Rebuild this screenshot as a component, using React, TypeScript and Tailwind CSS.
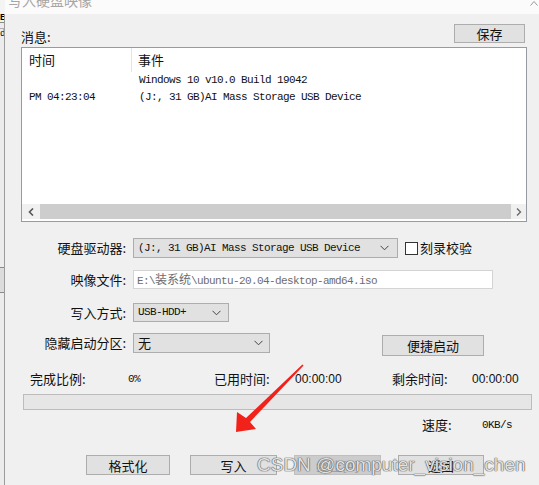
import React from "react";

const cjk = { fontFamily: '"Noto Sans CJK SC", "Noto Sans", sans-serif' };
const mono = { fontFamily: '"Liberation Mono", "Noto Sans CJK SC", monospace' };
const sans = { fontFamily: '"Liberation Sans", "Noto Sans CJK SC", sans-serif' };

function Chevron() {
  return (
    <svg width="9" height="6" viewBox="0 0 9 6" className="shrink-0">
      <path d="M0.5 0.8 L4.5 4.8 L8.5 0.8" fill="none" stroke="#444" strokeWidth="1" />
    </svg>
  );
}

function Btn({ children, w, disabled }: { children: React.ReactNode; w: string; disabled?: boolean }) {
  return (
    <div
      className={`${w} flex items-center justify-center border text-[13px] leading-none ${
        disabled ? "bg-[#cccccc] border-[#bfbfbf] text-[#a0a0a0]" : "bg-[#e1e1e1] border-[#adadad] text-[#111]"
      }`}
      style={cjk}
    >
      {children}
    </div>
  );
}

function Label({ children }: { children: React.ReactNode }) {
  return (
    <div className="w-[122px] shrink-0 text-right text-[13px] leading-[18px] text-[#111] pr-[1px]" style={cjk}>
      {children}
    </div>
  );
}

export default function App() {
  return (
    <div className="relative w-[539px] h-[485px] overflow-hidden bg-[#f0f0f0] flex flex-col">
      {/* title bar */}
      <div className="h-[14px] shrink-0 bg-[#fbfbfb] overflow-hidden flex">
        <div className="w-[5px] shrink-0 bg-[#f4f4f4]" />
        <div className="pl-[3px] -mt-[9px] text-[14px] leading-[18px] text-[#a6a6a6]" style={cjk}>
          写入硬盘映像
        </div>
        <svg className="ml-auto mr-[1px]" width="8" height="6" viewBox="0 0 8 6">
          <path d="M0.5 5.5 L4 1.5 L7.5 5.5" fill="none" stroke="#9a9a9a" strokeWidth="1" />
        </svg>
      </div>

      <div className="flex flex-1">
        {/* neighbouring window strip */}
        <div className="w-[5px] shrink-0 flex flex-col border-r border-[#9c9c9c] bg-[#ececec]">
          <div className="h-[9px] bg-[#f4f4d8] border-b border-[#888] text-[9px] leading-[9px] font-bold overflow-hidden" style={mono}>E</div>
          <div className="h-[6px] border-b border-[#b0b0b0]" />
          <div className="h-[10px] text-[9px] leading-[10px] overflow-hidden" style={mono}>d</div>
          <div className="h-[228px]" />
          <div className="h-[26px] bg-[#dcdcdc] border-y border-[#8a8a8a]" />
          <div className="flex-1" />
        </div>

        {/* dialog content */}
        <div className="flex-1 flex flex-col">
          {/* header row */}
          <div className="mt-[11px] h-[18px] flex items-end">
            <div className="ml-[16px] text-[13px] leading-[14px] text-[#111] -mb-[1px]" style={cjk}>
              消息:
            </div>
            <div className="ml-auto mr-[14px]">
              <Btn w="w-[71px] h-[19px]">保存</Btn>
            </div>
          </div>

          {/* list box */}
          <div className="mt-[4px] ml-[16px] w-[506px] h-[175px] border border-[#979aa0] bg-white flex flex-col">
            <div className="h-[24px] flex text-[13px] text-[#111]" style={cjk}>
              <div className="w-[110px] pl-[7px] flex items-center border-r border-[#e3e5e8]">时间</div>
              <div className="pl-[6px] flex items-center">事件</div>
            </div>
            <div className="flex flex-col text-[11px] tracking-[-0.6px] text-[#111] leading-[17px]" style={mono}>
              <div className="flex h-[17px]">
                <div className="w-[110px]" />
                <div className="pl-[7px]">Windows 10 v10.0 Build 19042</div>
              </div>
              <div className="flex h-[17px]">
                <div className="w-[110px] pl-[7px]">PM 04:23:04</div>
                <div className="pl-[7px]">(J:, 31 GB)AI Mass Storage USB Device</div>
              </div>
            </div>
            <div className="flex-1" />
            <div className="h-[15px] mb-[2px] flex">
              <div className="w-[18px] bg-[#f0f0f0] flex items-center justify-center">
                <svg width="6" height="8" viewBox="0 0 6 8">
                  <path d="M5 0.5 L1.5 4 L5 7.5" fill="none" stroke="#555" strokeWidth="1.6" />
                </svg>
              </div>
              <div className="flex-1 bg-[#cdcdcd]" />
              <div className="w-[15px] bg-[#f0f0f0] flex items-center justify-center">
                <svg width="6" height="8" viewBox="0 0 6 8">
                  <path d="M1 0.5 L4.5 4 L1 7.5" fill="none" stroke="#666" strokeWidth="1.3" />
                </svg>
              </div>
            </div>
          </div>

          {/* drive row */}
          <div className="mt-[16px] flex items-center h-[20px]">
            <Label>硬盘驱动器:</Label>
            <div className="ml-[6px] w-[265px] h-[20px] bg-[#e1e1e1] border border-[#adadad] flex items-center pl-[4px] pr-[8px]">
              <span className="text-[11px] tracking-[-0.6px] text-[#111] flex-1" style={mono}>
                (J:, 31 GB)AI Mass Storage USB Device
              </span>
              <Chevron />
            </div>
            <div className="ml-[7px] w-[13px] h-[13px] border border-[#333] bg-white" />
            <div className="ml-[2px] text-[13px] text-[#111]" style={cjk}>刻录校验</div>
          </div>

          {/* image file row */}
          <div className="mt-[12px] flex items-center h-[19px]">
            <Label>映像文件:</Label>
            <div className="ml-[6px] w-[360px] h-[19px] bg-white border border-[#d4d4d4] flex items-center pl-[3px]">
              <span className="text-[11px] tracking-[-0.6px] text-[#6d6d6d]" style={mono}>
                E:\<span className="text-[12px] tracking-normal" style={cjk}>装系统</span>\ubuntu-20.04-desktop-amd64.iso
              </span>
            </div>
          </div>

          {/* write mode row */}
          <div className="mt-[14px] flex items-center h-[19px]">
            <Label>写入方式:</Label>
            <div className="ml-[6px] w-[96px] h-[19px] bg-[#e1e1e1] border border-[#adadad] flex items-center pl-[4px] pr-[7px]">
              <span className="text-[11px] tracking-[-0.6px] text-[#111] flex-1" style={mono}>USB-HDD+</span>
              <Chevron />
            </div>
          </div>

          {/* hidden partition row */}
          <div className="mt-[11px] flex items-start h-[23px]">
            <div className="h-[20px] flex items-center">
              <Label>隐藏启动分区:</Label>
            </div>
            <div className="ml-[6px] w-[137px] h-[20px] bg-[#e1e1e1] border border-[#adadad] flex items-center pl-[4px] pr-[6px]">
              <span className="text-[13px] text-[#111] flex-1" style={cjk}>无</span>
              <Chevron />
            </div>
            <div className="ml-[112px] mt-[2px]">
              <Btn w="w-[102px] h-[21px]">便捷启动</Btn>
            </div>
          </div>

          {/* progress labels */}
          <div className="mt-[15px] h-[16px] flex items-center text-[13px] text-[#111]">
            <div className="ml-[25px] w-[98px]" style={cjk}>完成比例:</div>
            <div className="w-[86px] text-[11px] tracking-[-0.6px]" style={mono}>0%</div>
            <div className="w-[81px]" style={cjk}>已用时间:</div>
            <div className="w-[97px] text-[12px]" style={sans}>00:00:00</div>
            <div className="w-[80px]" style={cjk}>剩余时间:</div>
            <div className="text-[12px]" style={sans}>00:00:00</div>
          </div>

          {/* progress bar */}
          <div className="mt-[7px] ml-[18px] w-[509px] h-[16px] bg-[#e6e6e6] border border-[#bcbcbc]" />

          {/* speed */}
          <div className="mt-[7px] h-[16px] flex items-center text-[#111]">
            <div className="ml-[417px] w-[60px] text-[13px]" style={cjk}>速度:</div>
            <div className="text-[11px] tracking-[-0.6px]" style={mono}>0KB/s</div>
          </div>

          {/* buttons */}
          <div className="mt-[22px] flex">
            <div className="ml-[81px]"><Btn w="w-[84px] h-[20px]">格式化</Btn></div>
            <div className="ml-[20px]"><Btn w="w-[87px] h-[20px]">写入</Btn></div>
            <div className="ml-[17px]"><Btn w="w-[87px] h-[20px]" disabled>终止[A]</Btn></div>
            <div className="ml-[17px]"><Btn w="w-[86px] h-[20px]">返回</Btn></div>
          </div>
        </div>
      </div>

      {/* red annotation arrow */}
      <svg className="absolute left-0 top-0 pointer-events-none" width="539" height="485" viewBox="0 0 539 485">
        <polygon
          points="302.4,364.4 246,418 237,412 236,432 256,429 250,422 303.6,365.6"
          fill="#f2221b"
        />
      </svg>

      {/* watermark */}
      <div
        className="absolute left-[257px] top-[454px] text-[19px] leading-[22px] text-[#e2e2e2] [text-shadow:0_0_1px_#555,0_0_1px_#555,0_0_1px_#777] whitespace-nowrap"
        style={sans}
      >
        CSDN @computer_vision_chen
      </div>
    </div>
  );
}
